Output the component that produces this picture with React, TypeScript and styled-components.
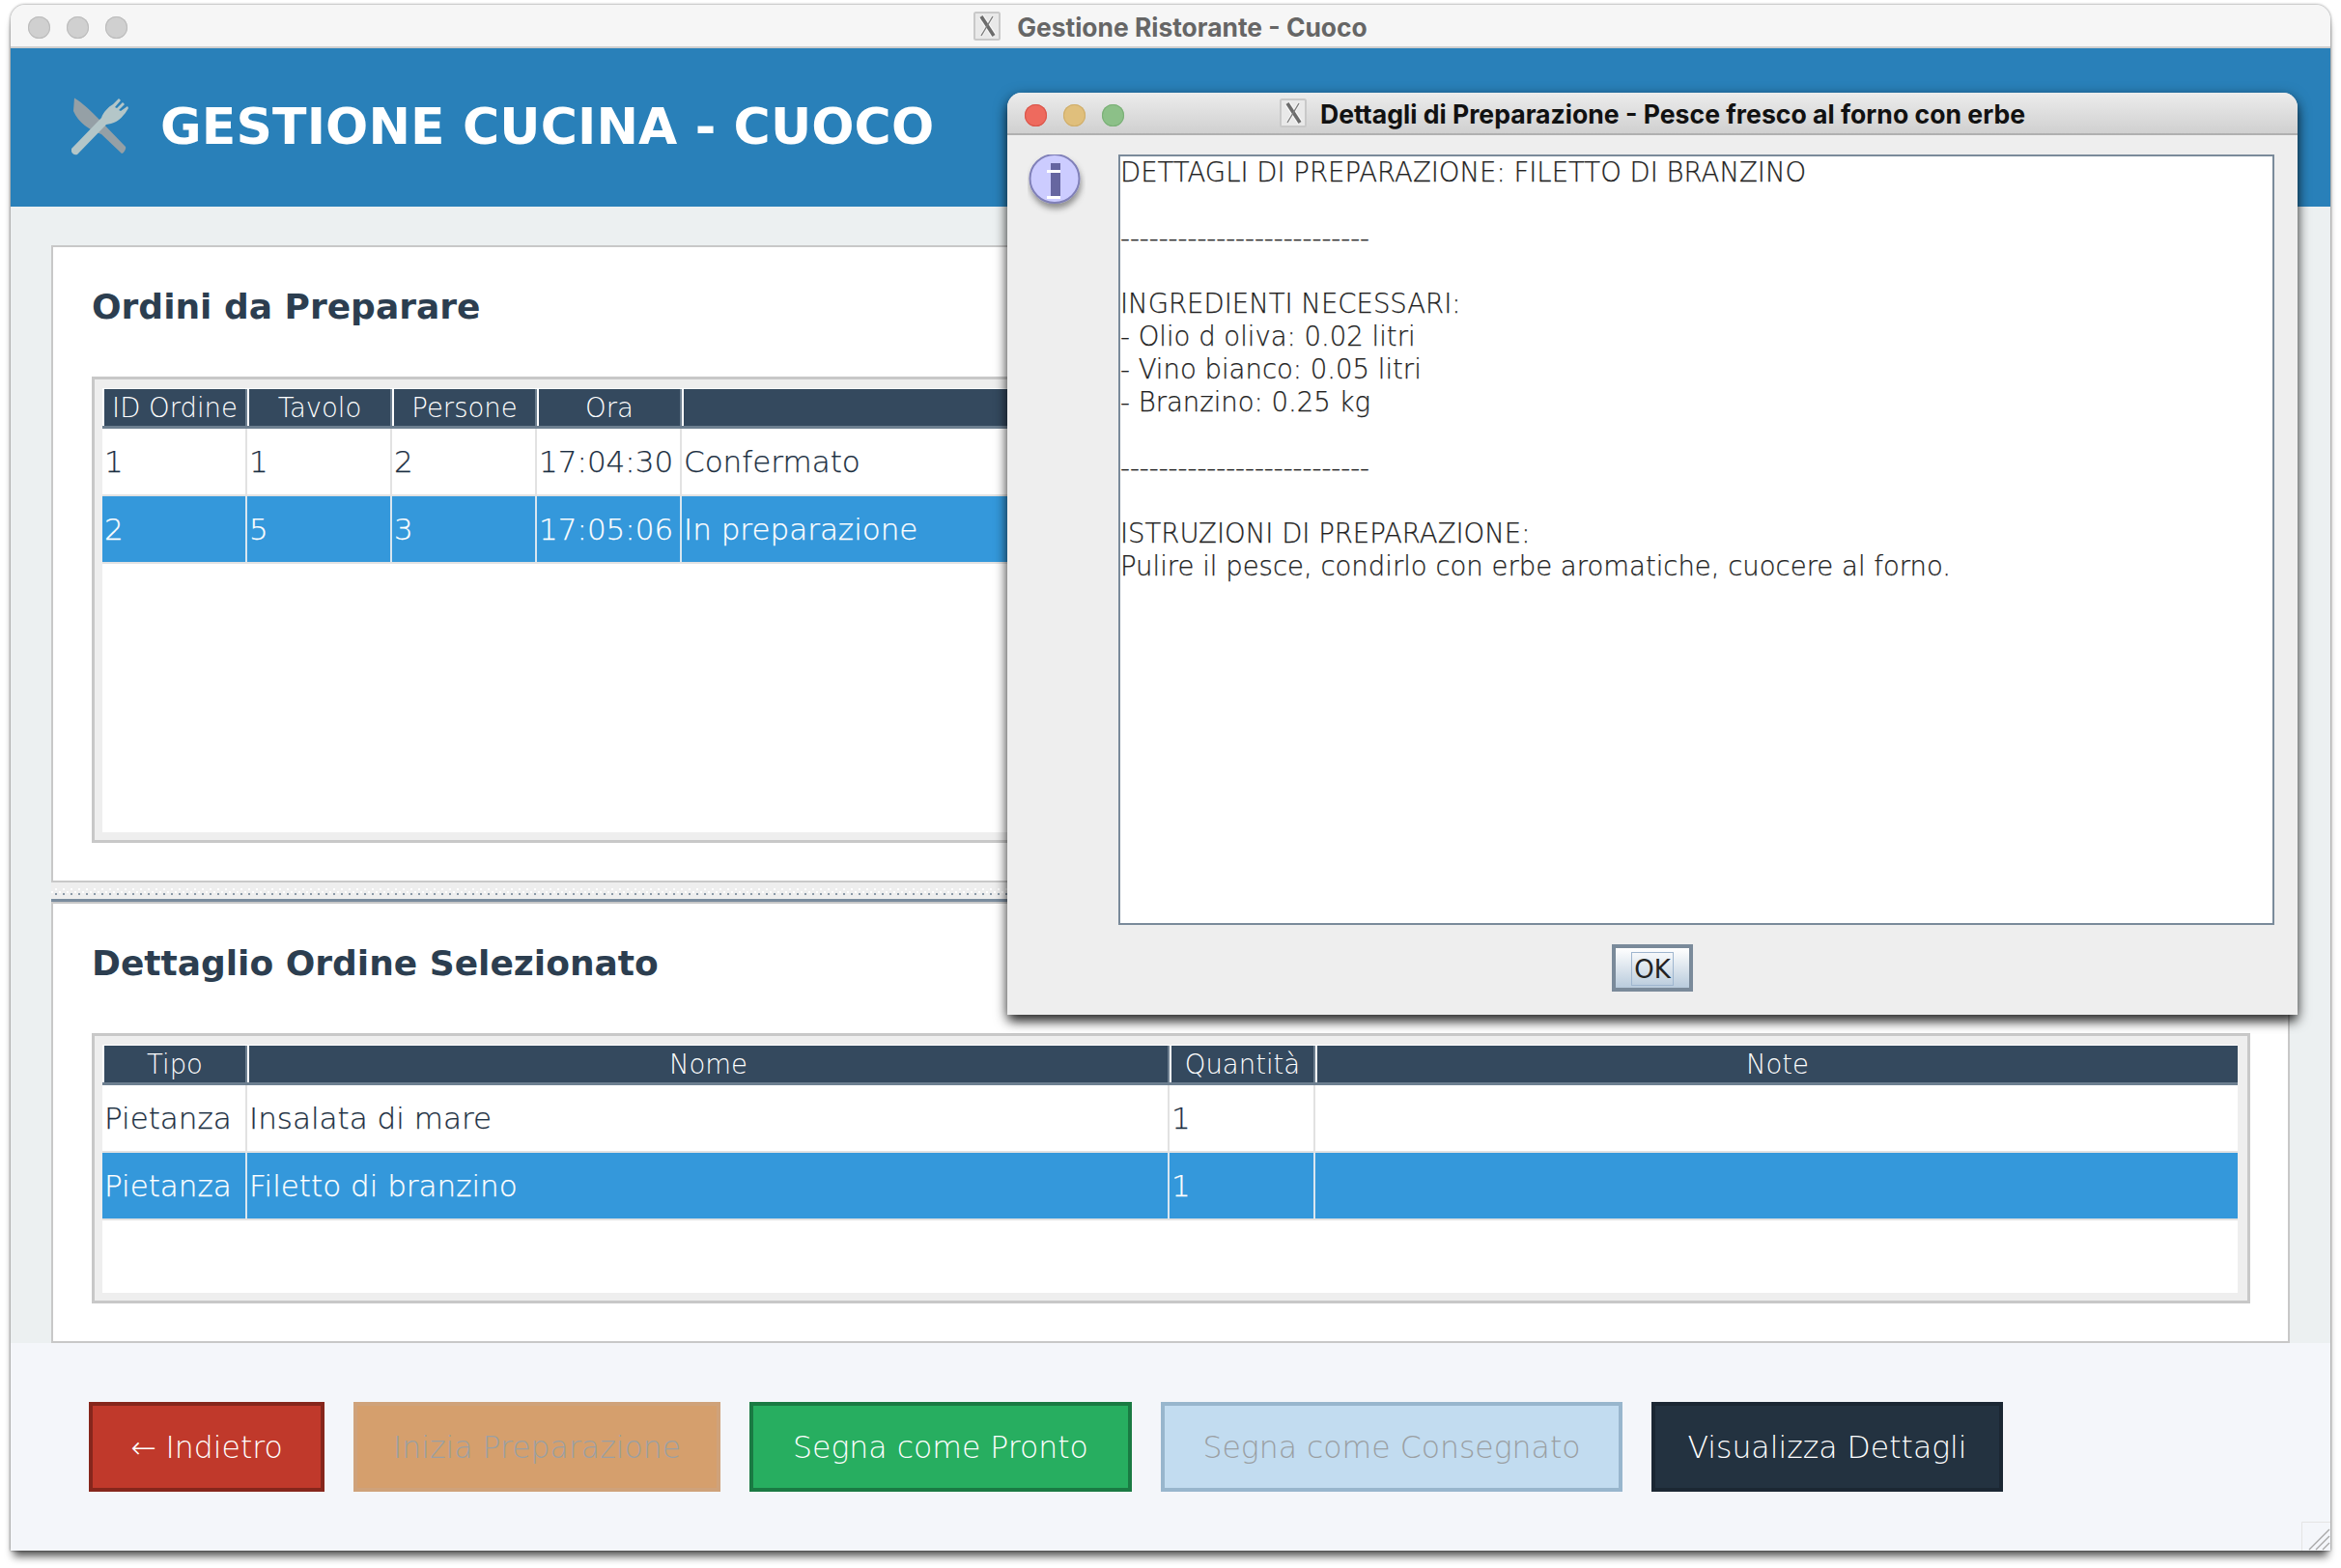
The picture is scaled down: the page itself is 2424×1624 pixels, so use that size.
import React from "react";
import styled, { createGlobalStyle } from "styled-components";

const Global = createGlobalStyle`
  html, body { margin: 0; padding: 0; background: #fff; }
  body { font-family: "DejaVu Sans", sans-serif; }
`;

const Stage = styled.div`
  width: 2424px;
  height: 1624px;
  padding: 5px 11px 18px;
  box-sizing: border-box;
`;

const Window = styled.div`
  position: relative;
  height: 100%;
  display: flex;
  flex-direction: column;
  border-radius: 15px 15px 0 0;
  background: #f4f6fa;
  box-shadow: 0 9px 9px -3px rgba(0, 0, 0, 0.65), 0 0 3px rgba(0, 0, 0, 0.55);
  overflow: hidden;
`;

const TitleBar = styled.div`
  position: relative;
  flex: none;
  height: 45px;
  box-sizing: border-box;
  display: flex;
  align-items: center;
  justify-content: center;
  gap: 17px;
  background: #f6f6f6;
  border-bottom: 2px solid #cdcdcd;
`;

const Lights = styled.div`
  position: absolute;
  left: 18px;
  top: 12px;
  display: flex;
  gap: 17px;
`;

const Light = styled.span<{ $c: string; $b: string }>`
  width: 23px;
  height: 23px;
  border-radius: 50%;
  background: ${(p) => p.$c};
  box-shadow: inset 0 0 0 1px ${(p) => p.$b};
`;

const TitleText = styled.span<{ $dark?: boolean }>`
  margin-top: 2px;
  font-family: Inter, sans-serif;
  font-weight: 700;
  font-size: ${(p) => (p.$dark ? 26.6 : 26.4)}px;
  color: ${(p) => (p.$dark ? "#111" : "#666")};
  white-space: nowrap;
`;

const Banner = styled.header`
  flex: none;
  height: 164px;
  box-sizing: border-box;
  display: flex;
  align-items: center;
  gap: 32px;
  padding: 0 0 2px 63px;
  background: #2980b9;
`;

const BannerTitle = styled.h1`
  margin: 0;
  font-size: 52px;
  font-weight: 700;
  letter-spacing: 0.13px;
  color: #fff;
  white-space: nowrap;
`;

const Body = styled.div`
  flex: none;
  height: 1177px;
  box-sizing: border-box;
  padding: 40px 42px 0;
  display: flex;
  flex-direction: column;
  background: #ecf0f1;
`;

const Panel = styled.section<{ $h: number }>`
  flex: none;
  height: ${(p) => p.$h}px;
  box-sizing: border-box;
  display: flex;
  flex-direction: column;
  padding: 0 39px 39px 40px;
  background: #fff;
  border: 2px solid #c8c8c8;
`;

const PanelTitle = styled.h2`
  flex: none;
  height: 134px;
  margin: 0;
  display: flex;
  align-items: center;
  padding-bottom: 12px;
  box-sizing: border-box;
  font-size: 36px;
  font-weight: 700;
  color: #2c3e50;
  white-space: nowrap;
`;

const Splitter = styled.div`
  flex: none;
  height: 20px;
  box-sizing: border-box;
  border-bottom: 3px solid #7a8c9e;
  background-color: #eeeeee;
  position: relative;
  overflow: hidden;
`;

const SplitterDots = styled.div<{ $color: string; $x: number; $y: number }>`
  position: absolute;
  left: 0;
  right: 0;
  top: ${(p) => p.$y}px;
  height: 2px;
  background-image: linear-gradient(90deg, ${(p) => p.$color} 2px, transparent 2px);
  background-size: 8px 2px;
  background-position: ${(p) => p.$x}px 0;
`;

const ScrollPane = styled.div`
  flex: 1;
  min-height: 0;
  display: flex;
  flex-direction: column;
  padding: 9px 10px 8px 8px;
  background: #eeeeee;
  border: 3px solid #c8c8c8;
`;

const TableArea = styled.div`
  flex: 1;
  background: #fff;
  padding-top: 1px;
`;

const HeaderRow = styled.div<{ $cols: string }>`
  display: grid;
  grid-template-columns: ${(p) => p.$cols};
  height: 41px;
  box-sizing: border-box;
  border-bottom: 3px solid #6d7f90;
  background: #34495e;
`;

const HeaderCell = styled.div`
  display: flex;
  align-items: center;
  justify-content: center;
  box-sizing: border-box;
  padding-bottom: 1px;
  font-size: 27.5px;
  font-weight: 200;
  color: #fff;
  white-space: nowrap;
  border-left: 2px solid #fff;
  border-right: 2px solid #6d7f90;
  &:last-child { border-right: none; }
`;

const Row = styled.div<{ $cols: string; $selected?: boolean }>`
  display: grid;
  grid-template-columns: ${(p) => p.$cols};
  height: 70px;
  box-sizing: border-box;
  border-bottom: 2px solid #e2e2e2;
  background: ${(p) => (p.$selected ? "#3498db" : "#fff")};
  color: ${(p) => (p.$selected ? "#fff" : "#1c2f42")};
`;

const Cell = styled.div<{ $selected?: boolean }>`
  display: flex;
  align-items: center;
  box-sizing: border-box;
  padding: 0 0 0 2px;
  font-size: 31px;
  font-weight: 200;
  -webkit-text-stroke: 0.25px currentColor;
  white-space: nowrap;
  overflow: hidden;
  border-right: 2px solid ${(p) => (p.$selected ? "#d8e6f0" : "#e2e2e2")};
  &:last-child { border-right: none; }
`;

const Footer = styled.footer`
  flex: none;
  height: 215px;
  box-sizing: border-box;
  display: flex;
  align-items: flex-start;
  gap: 30px;
  padding: 61px 0 0 81px;
  background: #f4f6fa;
`;

const ActionButton = styled.button<{ $w: number; $bg: string; $edge: string; $fg: string }>`
  width: ${(p) => p.$w}px;
  height: 93px;
  box-sizing: border-box;
  border: 4px solid ${(p) => p.$edge};
  background: ${(p) => p.$bg};
  color: ${(p) => p.$fg};
  font-family: "DejaVu Sans", sans-serif;
  font-size: 31.5px;
  font-weight: 200;
  white-space: nowrap;
  padding: 0;
`;

const Grip = styled.svg`
  position: absolute;
  right: 0;
  bottom: 0;
`;

const Dialog = styled.div`
  position: absolute;
  left: 1032px;
  top: 91px;
  width: 1336px;
  height: 955px;
  display: flex;
  flex-direction: column;
  border-radius: 15px 15px 0 0;
  background: #eeeeee;
  box-shadow: 0 8px 12px -2px rgba(0, 0, 0, 0.7), 0 4px 14px rgba(0, 0, 0, 0.5);
`;

const DialogBar = styled(TitleBar)`
  height: 44px;
  gap: 14px;
  border-radius: 15px 15px 0 0;
  background: linear-gradient(#ececec, #d0d0d0);
  border-bottom: 2px solid #b0b0b0;
`;

const DialogBody = styled.div`
  flex: 1;
  display: grid;
  grid-template-columns: 115px 1197px 1fr;
  grid-template-rows: auto 1fr;
  padding-top: 20px;
`;

const IconCell = styled.div`
  padding: 0 0 0 21px;
`;

const DetailBox = styled.div`
  height: 798px;
  box-sizing: border-box;
  overflow: hidden;
  border: 2px solid #7a8a9a;
  background: #fff;
`;

const DetailText = styled.div`
  margin-top: -1px;
  font-size: 27.5px;
  font-weight: 200;
  -webkit-text-stroke: 0.25px currentColor;
  line-height: 34px;
  color: #222;
  white-space: pre;
`;

const DialogFooter = styled.div`
  grid-column: 1 / -1;
  display: flex;
  justify-content: center;
  padding: 20px 0 0;
`;

const OkButton = styled.button`
  width: 84px;
  height: 49px;
  box-sizing: border-box;
  padding: 4px;
  border: 4px solid #7a8a9a;
  background: linear-gradient(#ffffff, #b9cbdc);
  font-family: "DejaVu Sans", sans-serif;
  font-size: 26px;
  font-weight: 400;
  color: #222;
`;

const OkLabel = styled.span`
  display: flex;
  align-items: center;
  justify-content: center;
  height: 100%;
  margin: 0 12px;
  border: 1px solid #9fb6cf;
`;

const XIcon = () => (
  <svg width="28" height="30" viewBox="0 0 28 30">
    <rect x="1" y="1" width="26" height="28" rx="1.5" fill="#e9e9e9" stroke="#c9c9c9" strokeWidth="2" />
    <path d="M8 5 L21 25" stroke="#f7f7f7" strokeWidth="6" />
    <path d="M20 5 L8 25" stroke="#f7f7f7" strokeWidth="3" />
    <path d="M8 5 L21 25" stroke="#6c6c6c" strokeWidth="3.6" />
    <path d="M20 5 L8 25" stroke="#7c7c7c" strokeWidth="1.4" />
  </svg>
);

const CutleryIcon = () => (
  <svg width="60" height="60" viewBox="15 12 60 60">
    <path d="M18 12.5 C26 17 36 27 43 34 L71 63 C72 65 69 70 67 70 L46 50 C34 46 22 38 17 26 Z" fill="#95a0a6" />
    <path d="M15 65 L46 33 C48 27 53 22 58 19 L64 13 L66 15 L60 22 L62 23 L68 17 L70 19 L64 25 L66 26 L73 21 L74 23 C70 30 64 37 56 39 L51 40 L21 71 C17 72 14 69 15 65 Z" fill="#b4c6c8" />
  </svg>
);

const InfoIcon = () => (
  <svg width="60" height="64" viewBox="0 1 60 64">
    <defs>
      <filter id="soft" x="-30%" y="-30%" width="160%" height="170%">
        <feDropShadow dx="1" dy="5" stdDeviation="3" floodColor="#000" floodOpacity="0.4" />
      </filter>
    </defs>
    <ellipse cx="28" cy="26" rx="25.5" ry="25" fill="#ccccff" stroke="#8080b8" strokeWidth="2" filter="url(#soft)" />
    <rect x="24" y="10" width="10" height="7" fill="#6666a0" />
    <rect x="24" y="20" width="10" height="24" fill="#6666a0" />
    <rect x="20" y="17" width="14" height="3" fill="#fff" />
    <rect x="20" y="44" width="14" height="3" fill="#fff" />
  </svg>
);

const cols1 = "150px 150px 150px 150px 1fr";
const cols2 = "150px 955px 151px 1fr";

const OrderRows = [
  { cells: ["1", "1", "2", "17:04:30", "Confermato"], selected: false },
  { cells: ["2", "5", "3", "17:05:06", "In preparazione"], selected: true },
];

const DishRows = [
  { cells: ["Pietanza", "Insalata di mare", "1", ""], selected: false },
  { cells: ["Pietanza", "Filetto di branzino", "1", ""], selected: true },
];

const detailText = `DETTAGLI DI PREPARAZIONE: FILETTO DI BRANZINO

--------------------------

INGREDIENTI NECESSARI:
- Olio d oliva: 0.02 litri
- Vino bianco: 0.05 litri
- Branzino: 0.25 kg

--------------------------

ISTRUZIONI DI PREPARAZIONE:
Pulire il pesce, condirlo con erbe aromatiche, cuocere al forno.`;

function DataTable({ cols, heads, rows }: { cols: string; heads: string[]; rows: { cells: string[]; selected: boolean }[] }) {
  return (
    <ScrollPane>
      <TableArea>
        <HeaderRow $cols={cols}>
          {heads.map((h, i) => (
            <HeaderCell key={i}>{h}</HeaderCell>
          ))}
        </HeaderRow>
        {rows.map((r, i) => (
          <Row key={i} $cols={cols} $selected={r.selected}>
            {r.cells.map((c, j) => (
              <Cell key={j} $selected={r.selected}>{c}</Cell>
            ))}
          </Row>
        ))}
      </TableArea>
    </ScrollPane>
  );
}

export default function App() {
  return (
    <Stage>
      <Global />
      <Window>
        <TitleBar>
          <Lights>
            <Light $c="#d0d0d0" $b="#bcbcbc" />
            <Light $c="#d0d0d0" $b="#bcbcbc" />
            <Light $c="#d0d0d0" $b="#bcbcbc" />
          </Lights>
          <XIcon />
          <TitleText>Gestione Ristorante - Cuoco</TitleText>
        </TitleBar>
        <Banner>
          <CutleryIcon />
          <BannerTitle>GESTIONE CUCINA - CUOCO</BannerTitle>
        </Banner>
        <Body>
          <Panel $h={660}>
            <PanelTitle>Ordini da Preparare</PanelTitle>
            <DataTable cols={cols1} heads={["ID Ordine", "Tavolo", "Persone", "Ora", ""]} rows={OrderRows} />
          </Panel>
          <Splitter>
            <SplitterDots $color="#ffffff" $x={4} $y={6} />
            <SplitterDots $color="#ffffff" $x={0} $y={9} />
            <SplitterDots $color="#8c9aa8" $x={4} $y={11} />
          </Splitter>
          <Panel $h={457}>
            <PanelTitle>Dettaglio Ordine Selezionato</PanelTitle>
            <DataTable cols={cols2} heads={["Tipo", "Nome", "Quantità", "Note"]} rows={DishRows} />
          </Panel>
        </Body>
        <Footer>
          <ActionButton $w={244} $bg="#c0392b" $edge="#86261c" $fg="#fff">← Indietro</ActionButton>
          <ActionButton $w={380} $bg="#d59f6d" $edge="#cfa27a" $fg="#9a9fa3">Inizia Preparazione</ActionButton>
          <ActionButton $w={396} $bg="#27ae60" $edge="#1a7a43" $fg="#fff">Segna come Pronto</ActionButton>
          <ActionButton $w={478} $bg="#c2dcf0" $edge="#98b6cd" $fg="#9a9fa3">Segna come Consegnato</ActionButton>
          <ActionButton $w={364} $bg="#233240" $edge="#1b2733" $fg="#fff">Visualizza Dettagli</ActionButton>
        </Footer>
        <Grip width="30" height="30" viewBox="0 0 30 30">
          <path d="M0.5 30 V0.5 H30" fill="none" stroke="#e4e4e4" />
          <path d="M8 29 L29 8 M15 29 L29 15 M22 29 L29 22" stroke="#a8a8a8" strokeWidth="1.4" />
        </Grip>
        <Dialog>
          <DialogBar>
            <Lights>
              <Light $c="#ee6a5e" $b="#d9574c" />
              <Light $c="#e0bf7c" $b="#cfae6c" />
              <Light $c="#8cc088" $b="#7bb077" />
            </Lights>
            <XIcon />
            <TitleText $dark>Dettagli di Preparazione - Pesce fresco al forno con erbe</TitleText>
          </DialogBar>
          <DialogBody>
            <IconCell>
              <InfoIcon />
            </IconCell>
            <DetailBox>
              <DetailText>{detailText}</DetailText>
            </DetailBox>
            <DialogFooter>
              <OkButton>
                <OkLabel>OK</OkLabel>
              </OkButton>
            </DialogFooter>
          </DialogBody>
        </Dialog>
      </Window>
    </Stage>
  );
}
